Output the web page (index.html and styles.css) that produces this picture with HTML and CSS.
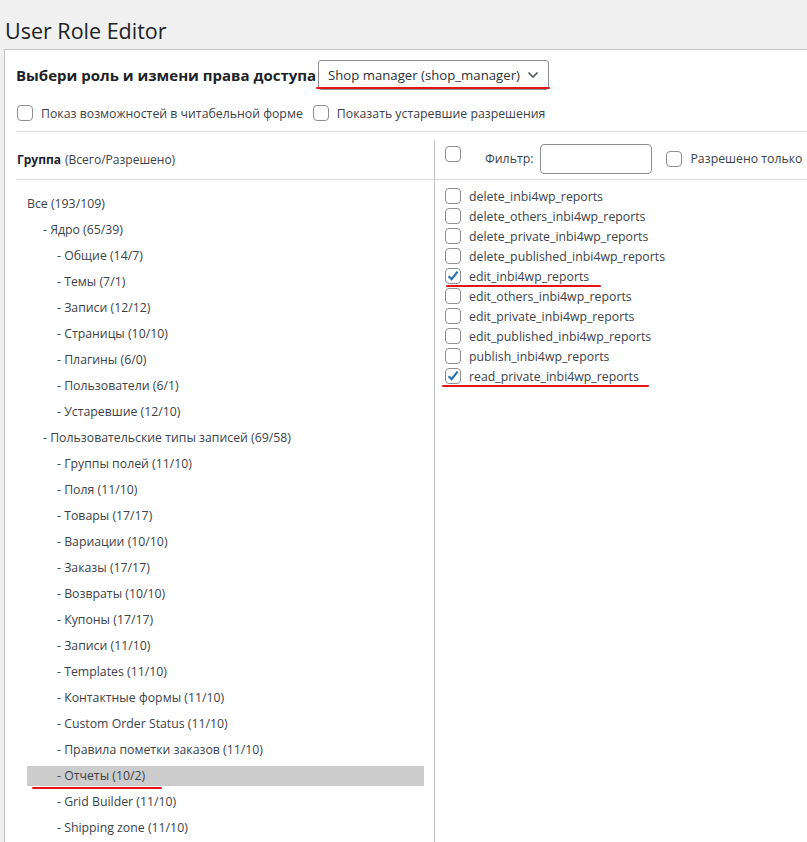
FILE: index.html
```html
<!DOCTYPE html>
<html lang="ru">
<head>
<meta charset="utf-8">
<title>User Role Editor</title>
<link rel="stylesheet" href="styles.css">
</head>
<body>
<h1 class="title">User Role Editor</h1>
<div class="panel">
  <div class="role-row">
    <span class="role-label">Выбери роль и измени права доступа</span>
    <div class="select-wrap">
      <div class="select">
        <span>Shop manager (shop_manager)</span>
        <svg class="chev" width="14" height="14" viewBox="0 0 14 14"><path d="M2.5 4.5 L7 9 L11.5 4.5" fill="none" stroke="#50575e" stroke-width="1.6"/></svg>
      </div>
      <div class="mark mark-select"></div>
    </div>
  </div>
  <div class="opts-row">
    <label class="opt"><span class="cb"></span>Показ возможностей в читабельной форме</label>
    <label class="opt"><span class="cb"></span>Показать устаревшие разрешения</label>
  </div>
  <div class="grid">
    <div class="col-left">
      <div class="head-left"><b>Группа</b> (Всего/Разрешено)</div>
      <ul class="tree">
        <li class="l0">Все (193/109)</li>
        <li class="l1">- Ядро (65/39)</li>
        <li class="l2">- Общие (14/7)</li>
        <li class="l2">- Темы (7/1)</li>
        <li class="l2">- Записи (12/12)</li>
        <li class="l2">- Страницы (10/10)</li>
        <li class="l2">- Плагины (6/0)</li>
        <li class="l2">- Пользователи (6/1)</li>
        <li class="l2">- Устаревшие (12/10)</li>
        <li class="l1">- Пользовательские типы записей (69/58)</li>
        <li class="l2">- Группы полей (11/10)</li>
        <li class="l2">- Поля (11/10)</li>
        <li class="l2">- Товары (17/17)</li>
        <li class="l2">- Вариации (10/10)</li>
        <li class="l2">- Заказы (17/17)</li>
        <li class="l2">- Возвраты (10/10)</li>
        <li class="l2">- Купоны (17/17)</li>
        <li class="l2">- Записи (11/10)</li>
        <li class="l2">- Templates (11/10)</li>
        <li class="l2">- Контактные формы (11/10)</li>
        <li class="l2">- Custom Order Status (11/10)</li>
        <li class="l2">- Правила пометки заказов (11/10)</li>
        <li class="l2 selected">- Отчеты (10/2)<span class="mark mark-tree"></span></li>
        <li class="l2">- Grid Builder (11/10)</li>
        <li class="l2">- Shipping zone (11/10)</li>
      </ul>
    </div>
    <div class="col-right">
      <div class="head-right">
        <span class="cb cb-top"></span>
        <span class="filter-label">Фильтр:</span>
        <span class="filter-input"></span>
        <label class="opt"><span class="cb"></span>Разрешено только</label>
      </div>
      <ul class="caps">
        <li><span class="cb"></span>delete_inbi4wp_reports</li>
        <li><span class="cb"></span>delete_others_inbi4wp_reports</li>
        <li><span class="cb"></span>delete_private_inbi4wp_reports</li>
        <li><span class="cb"></span>delete_published_inbi4wp_reports</li>
        <li><span class="cb checked"><svg viewBox="0 0 16 16" width="16" height="16"><path d="M3.6 8.2 L6.6 11.2 L12.6 3.6" fill="none" stroke="#2271b1" stroke-width="2.2"/></svg></span>edit_inbi4wp_reports<span class="mark mark-cap1"></span></li>
        <li><span class="cb"></span>edit_others_inbi4wp_reports</li>
        <li><span class="cb"></span>edit_private_inbi4wp_reports</li>
        <li><span class="cb"></span>edit_published_inbi4wp_reports</li>
        <li><span class="cb"></span>publish_inbi4wp_reports</li>
        <li><span class="cb checked"><svg viewBox="0 0 16 16" width="16" height="16"><path d="M3.6 8.2 L6.6 11.2 L12.6 3.6" fill="none" stroke="#2271b1" stroke-width="2.2"/></svg></span>read_private_inbi4wp_reports<span class="mark mark-cap2"></span></li>
      </ul>
    </div>
  </div>
</div>
</body>
</html>
```

FILE: styles.css
```css
html, body {
  margin: 0;
  padding: 0;
}
body {
  background: #f0f0f1;
  color: #3c434a;
  font-family: "Open Sans", "Noto Sans", sans-serif;
  font-size: 12.3px;
  width: 807px;
  height: 842px;
  overflow: hidden;
}
.title {
  margin: 0;
  padding: 16px 0 0 5px;
  height: 33px;
  font-size: 21.5px;
  font-weight: 400;
  line-height: 29px;
  color: #1d2327;
}
.panel {
  margin-left: 4px;
  background: #fff;
  border-top: 1px solid #c3c4c7;
  border-left: 1px solid #c3c4c7;
  padding-left: 11px;
  height: 800px;
}
.role-row {
  display: flex;
  align-items: center;
  height: 48px;
  padding-top: 1px;
}
.role-label {
  font-size: 15px;
  font-weight: 700;
  color: #1d2327;
  width: 302px;
  white-space: nowrap;
}
.select-wrap {
  position: relative;
}
.select {
  box-sizing: border-box;
  width: 231px;
  height: 30px;
  border: 1px solid #8c8f94;
  border-radius: 3px;
  display: flex;
  align-items: center;
  justify-content: space-between;
  padding: 0 8px 0 9px;
  font-size: 13.2px;
  color: #2c3338;
  white-space: nowrap;
}
.chev { display: block; }
.mark {
  position: absolute;
  height: 2px;
  background: #e3141b;
  border-radius: 1px;
}
.mark-select {
  left: -2px;
  width: 234px;
  top: 27px;
}
.opts-row {
  display: flex;
  align-items: center;
  gap: 10px;
  height: 28px;
  padding-left: 1px;
}
.opt {
  display: flex;
  align-items: center;
  gap: 8px;
  color: #3c434a;
  white-space: nowrap;
}
.cb {
  box-sizing: border-box;
  display: inline-block;
  flex: none;
  width: 16px;
  height: 16px;
  border: 1px solid #8c8f94;
  border-radius: 4px;
  background: #fff;
  position: relative;
}
.cb svg {
  position: absolute;
  left: -1px;
  top: -1px;
}
.grid {
  margin-top: 4px;
  border-top: 1px solid #dcdcde;
  display: grid;
  grid-template-columns: 419px 1fr;
}
.col-left {
  border-right: 1px solid #c3c4c7;
  margin-top: 8px;
}
.head-left {
  border-bottom: 1px solid #dcdcde;
  margin-top: -8px;
  display: flex;
  align-items: center;
  padding-left: 1px;
  padding-top: 8px;
  box-sizing: border-box;
  height: 48px;
  font-size: 12px;
  color: #3c434a;
  background: #fff;
  position: relative;
}
.head-left b { color: #1d2327; margin-right: 4px; }
.tree {
  list-style: none;
  margin: 0;
  padding: 14px 10px 0 11px;
}
.tree li {
  position: relative;
  height: 20px;
  line-height: 20px;
  margin-bottom: 6px;
  white-space: nowrap;
}
.tree .l1 { padding-left: 16px; }
.tree .l2 { padding-left: 30px; }
.tree .selected { background: #cccccc; }
.mark-tree {
  left: 5px;
  width: 130px;
  top: 21px;
}
.col-right {
  position: relative;
  overflow: hidden;
}
.head-right {
  height: 48px;
  box-sizing: border-box;
  border-bottom: 1px solid #dcdcde;
  display: flex;
  align-items: center;
  padding-left: 10px;
  padding-top: 6px;
}
.cb-top {
  align-self: flex-start;
  margin-top: 8px;
}
.filter-label {
  margin-left: 24px;
  margin-right: 7px;
  color: #3c434a;
  white-space: nowrap;
}
.filter-input {
  flex: none;
  box-sizing: border-box;
  width: 112px;
  height: 30px;
  border: 1px solid #8c8f94;
  border-radius: 4px;
  margin-right: 14px;
}
.caps {
  list-style: none;
  margin: 0;
  padding: 6px 0 0 10px;
}
.caps li {
  position: relative;
  display: flex;
  align-items: center;
  gap: 8px;
  height: 20px;
  white-space: nowrap;
}
.mark-cap1 {
  left: 1px;
  width: 155px;
  top: 19px;
}
.mark-cap2 {
  left: -3px;
  width: 207px;
  top: 19px;
}
```
